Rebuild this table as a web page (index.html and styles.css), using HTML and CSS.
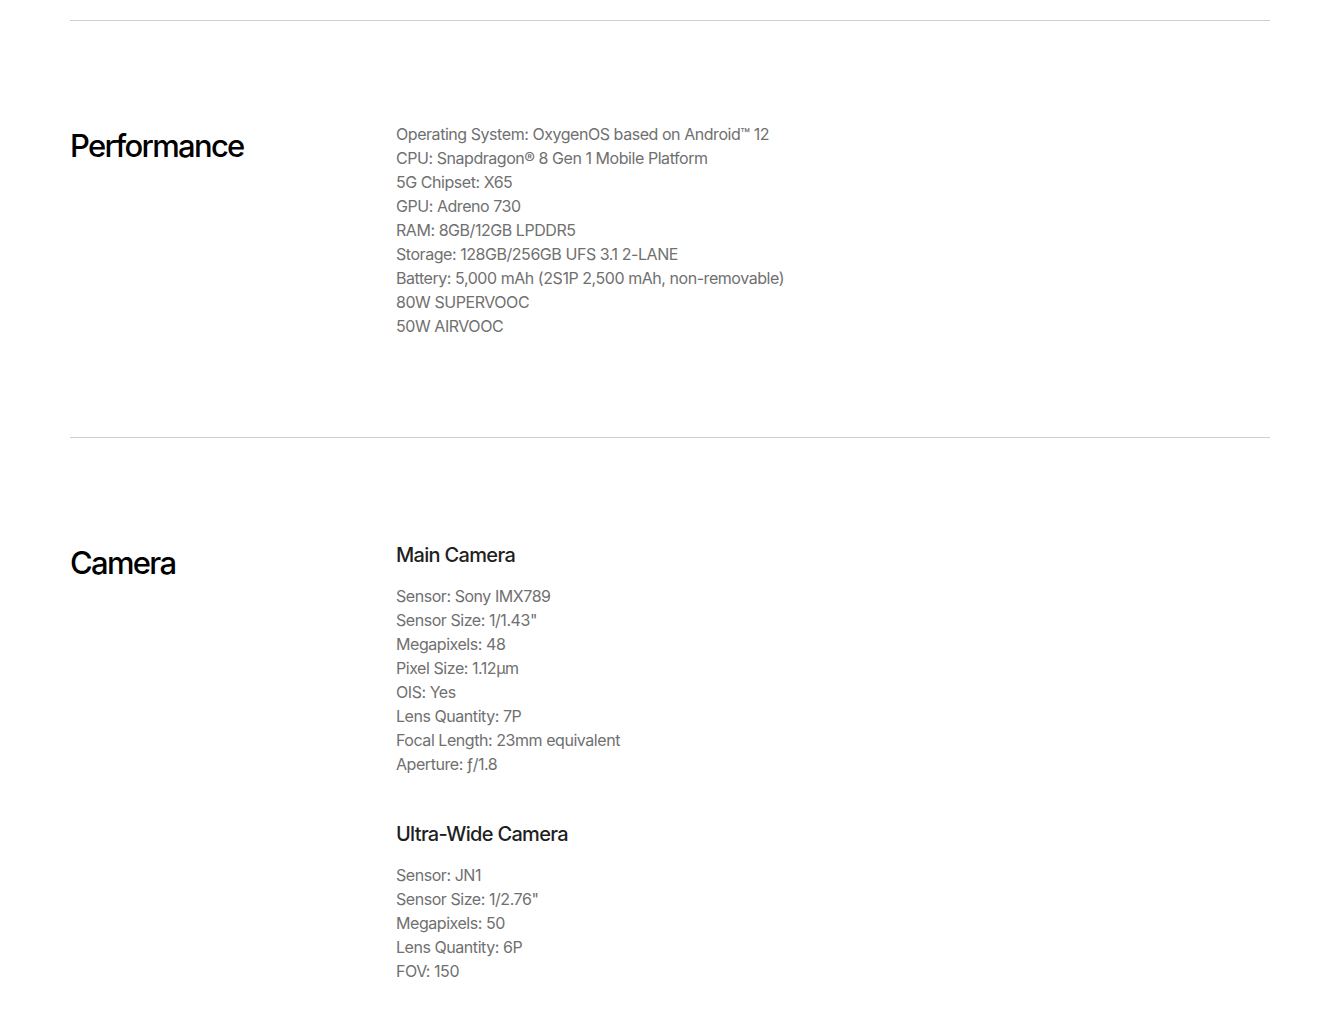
FILE: index.html
```html
<!DOCTYPE html>
<html lang="en">
<head>
<meta charset="utf-8">
<title>Specs</title>
<link rel="stylesheet" href="styles.css">
</head>
<body>
<main class="specs">
  <section class="spec-row">
    <h2 class="spec-title">Performance</h2>
    <div class="spec-body">
      <ul class="spec-list">
        <li>Operating System: OxygenOS based on Android™ 12</li>
        <li>CPU: Snapdragon® 8 Gen 1 Mobile Platform</li>
        <li>5G Chipset: X65</li>
        <li>GPU: Adreno 730</li>
        <li>RAM: 8GB/12GB LPDDR5</li>
        <li>Storage: 128GB/256GB UFS 3.1 2-LANE</li>
        <li>Battery: 5,000 mAh (2S1P 2,500 mAh, non-removable)</li>
        <li>80W SUPERVOOC</li>
        <li>50W AIRVOOC</li>
      </ul>
    </div>
  </section>
  <section class="spec-row">
    <h2 class="spec-title">Camera</h2>
    <div class="spec-body">
      <div class="spec-group">
        <h3 class="spec-sub">Main Camera</h3>
        <ul class="spec-list">
          <li>Sensor: Sony IMX789</li>
          <li>Sensor Size: 1/1.43"</li>
          <li>Megapixels: 48</li>
          <li>Pixel Size: 1.12μm</li>
          <li>OIS: Yes</li>
          <li>Lens Quantity: 7P</li>
          <li>Focal Length: 23mm equivalent</li>
          <li>Aperture: ƒ/1.8</li>
        </ul>
      </div>
      <div class="spec-group">
        <h3 class="spec-sub">Ultra-Wide Camera</h3>
        <ul class="spec-list">
          <li>Sensor: JN1</li>
          <li>Sensor Size: 1/2.76"</li>
          <li>Megapixels: 50</li>
          <li>Lens Quantity: 6P</li>
          <li>FOV: 150</li>
        </ul>
      </div>
    </div>
  </section>
</main>
</body>
</html>
```
FILE: styles.css
```css
* { box-sizing: border-box; }
html, body { margin: 0; padding: 0; background: #fff; }
body {
  font-family: Inter, "Liberation Sans", sans-serif;
  color: #000;
  padding-top: 20px;
}
.specs {
  width: 1200px;
  margin: 0 auto;
  position: relative;
  left: 1px;
}
.spec-row {
  display: grid;
  grid-template-columns: 326px 1fr;
  border-top: 1px solid #cfcfcf;
  padding: 101px 0 99px;
}
.spec-title {
  margin: 0;
  font-size: 31px;
  line-height: 48px;
  font-weight: 500;
  letter-spacing: -0.055em;
  color: #000;
}
.spec-body {
  display: flex;
  flex-direction: column;
  gap: 42px;
}
.spec-sub {
  margin: 0 0 13px;
  font-size: 20px;
  line-height: 32px;
  font-weight: 500;
  letter-spacing: -0.034em;
  color: #1f1f1f;
}
.spec-list {
  list-style: none;
  margin: 0;
  padding: 0;
  font-size: 16px;
  line-height: 24px;
  color: #707070;
  letter-spacing: -0.028em;
}
```
